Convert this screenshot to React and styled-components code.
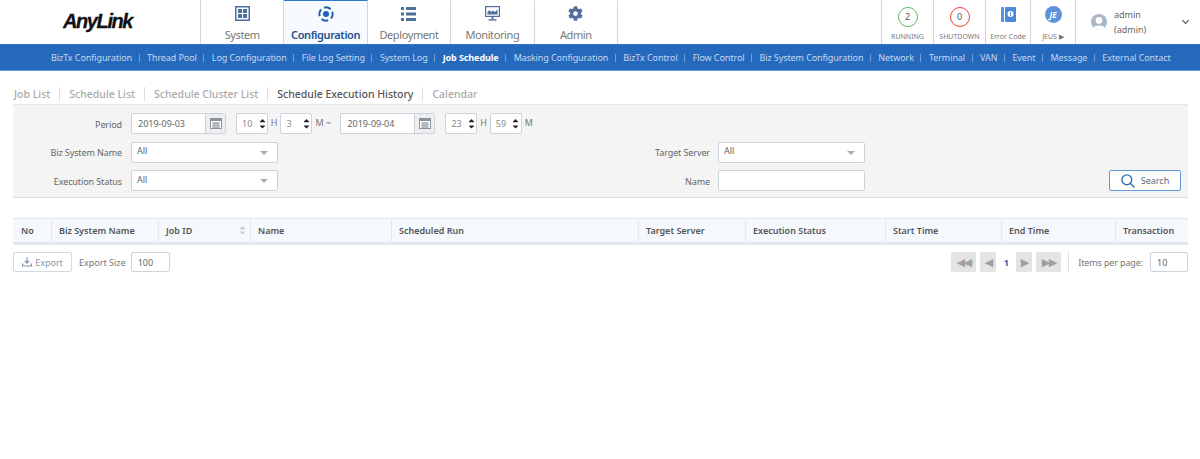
import React from "react";
import styled, { createGlobalStyle } from "styled-components";
import { FaCog, FaCaretUp, FaCaretDown } from "react-icons/fa";

const GlobalStyle = createGlobalStyle`
  html, body { margin: 0; padding: 0; background: #fff; }
  body { font-family: "Noto Sans", "Open Sans", sans-serif; color: #555; overflow: hidden; }
  * { box-sizing: border-box; }
`;

const navItems = [
  { label: "System", icon: <SystemIcon /> },
  { label: "Configuration", icon: <ConfigIcon />, active: true },
  { label: "Deployment", icon: <ListIcon /> },
  { label: "Monitoring", icon: <MonitorIcon /> },
  { label: "Admin", icon: <FaCog size={15} color="#4f6f9f" /> },
];

const subItems = [
  "BizTx Configuration", "Thread Pool", "Log Configuration", "File Log Setting", "System Log",
  "Job Schedule", "Masking Configuration", "BizTx Control", "Flow Control", "Biz System Configuration",
  "Network", "Terminal", "VAN", "Event", "Message", "External Contact",
];

const tabs = ["Job List", "Schedule List", "Schedule Cluster List", "Schedule Execution History", "Calendar"];

const columns = [
  { label: "No", width: 39 },
  { label: "Biz System Name", width: 107 },
  { label: "Job ID", width: 92, sort: true },
  { label: "Name", width: 141 },
  { label: "Scheduled Run", width: 247 },
  { label: "Target Server", width: 107 },
  { label: "Execution Status", width: 140 },
  { label: "Start Time", width: 116 },
  { label: "End Time", width: 114 },
  { label: "Transaction", width: 72 },
];

function SystemIcon() {
  return (
    <svg width="15" height="15" viewBox="0 0 15 15">
      <rect x="0.75" y="0.75" width="13.5" height="13.5" fill="none" stroke="#4f6f9f" strokeWidth="1.5" />
      <rect x="3" y="3" width="4" height="4" fill="#4f6f9f" />
      <rect x="8" y="3" width="4" height="4" fill="#4f6f9f" />
      <rect x="3" y="8" width="4" height="4" fill="#4f6f9f" />
      <rect x="8" y="8" width="4" height="4" fill="#4f6f9f" />
    </svg>
  );
}

function ConfigIcon() {
  return (
    <svg width="16" height="16" viewBox="0 0 16 16">
      <circle cx="8" cy="8" r="3" fill="#1f5fb4" />
      <circle cx="8" cy="8" r="6.6" fill="none" stroke="#1f5fb4" strokeWidth="2" strokeDasharray="7 3.4" transform="rotate(-20 8 8)" />
    </svg>
  );
}

function ListIcon() {
  return (
    <svg width="15" height="14" viewBox="0 0 15 14" fill="#4f6f9f">
      <rect x="0" y="0" width="3" height="3" />
      <rect x="5" y="0" width="10" height="3" />
      <rect x="0" y="5.5" width="3" height="3" />
      <rect x="5" y="5.5" width="10" height="3" />
      <rect x="0" y="11" width="3" height="3" />
      <rect x="5" y="11" width="10" height="3" />
    </svg>
  );
}

function MonitorIcon() {
  return (
    <svg width="15" height="15" viewBox="0 0 15 15">
      <rect x="0.6" y="0.6" width="13.8" height="9.8" fill="none" stroke="#4f6f9f" strokeWidth="1.2" />
      <path d="M2.5 8.5 V6 L4.5 4 L6 6 L8 4.5 L10 6 L12.5 3.5 V8.5 Z" fill="#4f6f9f" />
      <rect x="6.6" y="10.5" width="1.8" height="2.8" fill="#4f6f9f" />
      <rect x="3.5" y="13.2" width="8" height="1.4" fill="#4f6f9f" />
    </svg>
  );
}

function ErrorBookIcon() {
  return (
    <svg width="15" height="15" viewBox="0 0 15 15">
      <rect x="0" y="0" width="3" height="15" rx="0.5" fill="#5b93dc" />
      <rect x="4" y="0" width="11" height="15" rx="1" fill="#4d8ad6" />
      <circle cx="9.5" cy="7" r="3" fill="#fff" />
      <rect x="9" y="5" width="1" height="2.6" fill="#4d8ad6" />
      <rect x="9" y="8.1" width="1" height="1" fill="#4d8ad6" />
    </svg>
  );
}

function CalendarIcon() {
  return (
    <svg width="12" height="11" viewBox="0 0 12 11">
      <rect x="0.5" y="0.5" width="11" height="10" fill="#fff" stroke="#8a929c" />
      <rect x="0" y="0" width="12" height="3" fill="#8a929c" />
      <path d="M2 5h8M2 7h8M2 9h8M4 4v6M6 4v6M8 4v6" stroke="#8a929c" strokeWidth="0.8" />
    </svg>
  );
}

function ExportIcon() {
  return (
    <svg width="10" height="10" viewBox="0 0 10 10" fill="none" stroke="#7f93ad" strokeWidth="1.2">
      <path d="M5 0.5 V6 M2.8 3.8 L5 6.2 L7.2 3.8" />
      <path d="M0.6 6.5 V9 H9.4 V6.5" />
    </svg>
  );
}

function SearchIcon() {
  return (
    <svg width="14" height="14" viewBox="0 0 14 14" fill="none" stroke="#2e6fc0" strokeWidth="1.4">
      <circle cx="5.8" cy="5.8" r="4.9" />
      <path d="M9.3 9.3 L13.4 13.4" />
    </svg>
  );
}

function UserIcon() {
  return (
    <svg width="16" height="16" viewBox="0 0 16 16">
      <circle cx="8" cy="8" r="8" fill="#a9b7c9" />
      <circle cx="8" cy="6.4" r="3.3" fill="#fff" />
      <path d="M2.6 14 C3.4 10.8 12.6 10.8 13.4 14 C10.5 16.6 5.5 16.6 2.6 14 Z" fill="#fff" />
    </svg>
  );
}

const Spinner = ({ value }) => (
  <SpinBox>
    <span>{value}</span>
    <SpinArrows>
      <FaCaretUp size={9} />
      <FaCaretDown size={9} />
    </SpinArrows>
  </SpinBox>
);

const DatePicker = ({ value }) => (
  <DateBox>
    <span>{value}</span>
    <DateButton><CalendarIcon /></DateButton>
  </DateBox>
);

const Select = ({ value }) => (
  <SelectBox>
    <span>{value}</span>
    <SelectCaret />
  </SelectBox>
);

export default function App() {
  return (
    <Page>
      <GlobalStyle />
      <Header>
        <LogoArea>
          <Logo>AnyLink</Logo>
        </LogoArea>
        <MainNav>
          {navItems.map((item) => (
            <NavItem key={item.label} $active={item.active}>
              <NavIcon>{item.icon}</NavIcon>
              <NavLabel $active={item.active}>{item.label}</NavLabel>
            </NavItem>
          ))}
        </MainNav>
        <HeaderRight>
          <StatusCell $width={52}>
            <StatusCircle $color="#5cb85c">2</StatusCircle>
            <StatusLabel>RUNNING</StatusLabel>
          </StatusCell>
          <StatusCell $width={52}>
            <StatusCircle $color="#ee3b3b">0</StatusCircle>
            <StatusLabel>SHUTDOWN</StatusLabel>
          </StatusCell>
          <StatusCell $width={45}>
            <ErrorBook><ErrorBookIcon /></ErrorBook>
            <StatusLabel>Error Code</StatusLabel>
          </StatusCell>
          <StatusCell $width={45}>
            <JeusBadge>JE</JeusBadge>
            <StatusLabel>JEUS ▶</StatusLabel>
          </StatusCell>
          <UserCell>
            <UserIcon />
            <UserName>admin<br />(admin)</UserName>
            <Chevron />
          </UserCell>
        </HeaderRight>
      </Header>

      <SubNav>
        {subItems.map((item) => (
          <SubItem key={item} $active={item === "Job Schedule"}>{item}</SubItem>
        ))}
      </SubNav>

      <Tabs>
        {tabs.map((tab) => (
          <Tab key={tab} $active={tab === "Schedule Execution History"}>{tab}</Tab>
        ))}
      </Tabs>

      <Filter>
        <FilterRow>
          <Label>Period</Label>
          <DatePicker value="2019-09-03" />
          <TimeGroup>
            <Spinner value="10" />
            <Unit>H</Unit>
            <Spinner value="3" />
            <Unit>M ~</Unit>
          </TimeGroup>
          <DatePicker value="2019-09-04" />
          <TimeGroup>
            <Spinner value="23" />
            <Unit>H</Unit>
            <Spinner value="59" />
            <Unit>M</Unit>
          </TimeGroup>
        </FilterRow>
        <FilterRow>
          <Label>Biz System Name</Label>
          <Select value="All" />
          <Label $second>Target Server</Label>
          <Select value="All" />
        </FilterRow>
        <FilterRow>
          <Label>Execution Status</Label>
          <Select value="All" />
          <Label $second>Name</Label>
          <TextBox />
          <SearchButton><SearchIcon />Search</SearchButton>
        </FilterRow>
      </Filter>

      <Table>
        {columns.map((col) => (
          <HeadCell key={col.label} $width={col.width}>
            {col.label}
            {col.sort && <SortMark><FaCaretUp size={9} /><FaCaretDown size={9} /></SortMark>}
          </HeadCell>
        ))}
      </Table>

      <Footer>
        <ExportButton><ExportIcon />Export</ExportButton>
        <FooterLabel>Export Size</FooterLabel>
        <SizeBox $width={39}>100</SizeBox>
        <Pager>
          <PageButton $width={25}>◀◀</PageButton>
          <PageButton $width={16}>◀</PageButton>
          <PageNumber>1</PageNumber>
          <PageButton $width={16}>▶</PageButton>
          <PageButton $width={25}>▶▶</PageButton>
          <PagerDivider />
          <PerPageLabel>Items per page:</PerPageLabel>
          <SizeBox $width={38}>10</SizeBox>
        </Pager>
      </Footer>
    </Page>
  );
}

const Page = styled.div`
  width: 1200px;
  height: 459px;
  overflow: hidden;
  background: #fff;
`;

const Header = styled.header`
  display: flex;
  height: 44px;
  background: #fff;
`;

const LogoArea = styled.div`
  width: 200px;
  display: flex;
  align-items: center;
  padding-left: 63px;
`;

const Logo = styled.div`
  font-family: "Liberation Sans", sans-serif;
  font-size: 20px;
  font-weight: 700;
  font-style: italic;
  letter-spacing: -1.4px;
  -webkit-text-stroke: 0.3px #111;
  color: #111;
  margin-top: -2px;
`;

const MainNav = styled.nav`
  display: flex;
  height: 44px;
  border-left: 1px solid #d5d5d5;
`;

const NavItem = styled.div`
  width: 83.4px;
  height: 44px;
  border-right: 1px solid #d5d5d5;
  border-top: 1px solid ${(p) => (p.$active ? "#2f76c8" : "transparent")};
  background: ${(p) => (p.$active ? "#f7fbff" : "#fff")};
  display: flex;
  flex-direction: column;
  align-items: center;
`;

const NavIcon = styled.div`
  height: 17px;
  margin-top: 4px;
  display: flex;
  align-items: center;
`;

const NavLabel = styled.div`
  margin-top: 5px;
  font-size: 11px;
  line-height: 15px;
  letter-spacing: -0.4px;
  color: ${(p) => (p.$active ? "#1e4f8f" : "#777")};
  font-weight: ${(p) => (p.$active ? 600 : 400)};
`;

const HeaderRight = styled.div`
  margin-left: auto;
  display: flex;
  height: 44px;
`;

const StatusCell = styled.div`
  width: ${(p) => p.$width}px;
  border-left: 1px solid #d5d5d5;
  display: flex;
  flex-direction: column;
  align-items: center;
`;

const StatusCircle = styled.div`
  width: 20px;
  height: 20px;
  margin-top: 7px;
  border-radius: 50%;
  border: 1.5px solid ${(p) => p.$color};
  font-size: 9px;
  line-height: 17px;
  text-align: center;
  color: #555;
`;

const StatusLabel = styled.div`
  margin-top: 5px;
  font-size: 7px;
  line-height: 10px;
  color: #777;
  white-space: nowrap;
`;

const ErrorBook = styled.div`
  height: 15px;
  margin-top: 7px;
  margin-bottom: 5px;
  line-height: 0;
`;

const JeusBadge = styled.div`
  width: 17px;
  height: 17px;
  margin-top: 6px;
  margin-bottom: 4px;
  border-radius: 50%;
  background: #5b93dc;
  color: #fff;
  font-size: 8px;
  font-weight: 700;
  font-style: italic;
  line-height: 17px;
  text-align: center;
`;

const UserCell = styled.div`
  width: 125px;
  border-left: 1px solid #d5d5d5;
  display: flex;
  align-items: center;
  padding-left: 15px;
`;

const UserName = styled.div`
  margin-left: 7px;
  font-size: 9px;
  line-height: 15px;
  color: #666;
`;

const Chevron = styled.div`
  width: 5px;
  height: 5px;
  margin-left: auto;
  margin-right: 12px;
  margin-top: -3px;
  border-right: 1px solid #444;
  border-bottom: 1px solid #444;
  transform: rotate(45deg);
`;

const SubNav = styled.div`
  height: 27px;
  background: #2569bd;
  border-top: 1px solid #2f72c4;
  border-bottom: 1px solid #5e97d9;
  display: flex;
  align-items: center;
  padding-left: 43.5px;
`;

const SubItem = styled.div`
  position: relative;
  padding: 0 7.5px;
  font-size: 9px;
  line-height: 12px;
  letter-spacing: -0.09px;
  white-space: nowrap;
  color: ${(p) => (p.$active ? "#fff" : "#c5d8ef")};
  font-weight: ${(p) => (p.$active ? 700 : 400)};
  &:not(:last-child)::after {
    content: "";
    position: absolute;
    right: 0;
    top: 2px;
    height: 8px;
    width: 1px;
    background: #6f9fd8;
  }
`;

const Tabs = styled.div`
  display: flex;
  align-items: center;
  height: 14px;
  margin: 16px 0 0 14px;
`;

const Tab = styled.div`
  font-size: 10.5px;
  font-weight: 500;
  line-height: 14px;
  color: ${(p) => (p.$active ? "#555" : "#aaa")};
  padding-right: 9px;
  margin-right: 9px;
  border-right: 1px solid #ddd;
  &:last-child { border-right: none; }
`;

const Filter = styled.section`
  margin: 3px 12px 0 13px;
  height: 94px;
  background: #f4f4f4;
  border-top: 1px solid #e6e6e6;
  border-bottom: 1px solid #dcdcdc;
  padding-top: 8px;
  display: flex;
  flex-direction: column;
  gap: 7.5px;
`;

const FilterRow = styled.div`
  display: flex;
  align-items: center;
  height: 21px;
`;

const Label = styled.div`
  width: ${(p) => (p.$second ? "432px" : "109px")};
  margin-right: ${(p) => (p.$second ? "8px" : "9px")};
  padding-top: 1px;
  text-align: right;
  font-size: 9px;
  letter-spacing: -0.1px;
  color: #666;
  white-space: nowrap;
`;

const fieldBorder = "1px solid #cdd3dc";

const DateBox = styled.div`
  width: 95px;
  height: 21px;
  display: flex;
  align-items: center;
  justify-content: space-between;
  background: #fff;
  border: ${fieldBorder};
  border-radius: 2px;
  padding-left: 6px;
  font-size: 9px;
  color: #666;
`;

const DateButton = styled.div`
  width: 20px;
  height: 19px;
  background: #eee;
  border-left: ${fieldBorder};
  display: flex;
  align-items: center;
  justify-content: center;
`;

const TimeGroup = styled.div`
  display: flex;
  align-items: center;
  margin-left: 10px;
`;

const SpinBox = styled.div`
  width: 32px;
  height: 21px;
  display: flex;
  align-items: center;
  justify-content: space-between;
  background: #fff;
  border: ${fieldBorder};
  border-radius: 2px;
  padding-left: 5px;
  font-size: 9px;
  color: #8a8a8a;
`;

const SpinArrows = styled.div`
  width: 10px;
  display: flex;
  flex-direction: column;
  align-items: center;
  color: #222;
  & > svg { display: block; margin: -1.5px 0; }
`;

const Unit = styled.div`
  width: 12.4px;
  margin-top: -3px;
  text-align: center;
  font-size: 9px;
  color: #777;
  white-space: nowrap;
  &:last-child { width: 28px; text-align: left; padding-left: 3px; }
`;

const SelectBox = styled.div`
  width: 147px;
  height: 21px;
  display: flex;
  align-items: center;
  justify-content: space-between;
  background: #fff;
  border: ${fieldBorder};
  border-radius: 2px;
  padding: 0 5px 3px 5px;
  font-size: 9px;
  color: #666;
`;

const SelectCaret = styled.div`
  width: 0;
  height: 0;
  margin: 4px 4px 0 0;
  border-left: 4px solid transparent;
  border-right: 4px solid transparent;
  border-top: 4px solid #a5adb8;
`;

const TextBox = styled.div`
  width: 147px;
  height: 21px;
  background: #fff;
  border: ${fieldBorder};
  border-radius: 2px;
`;

const SearchButton = styled.div`
  width: 72px;
  height: 21px;
  margin-left: 244px;
  display: flex;
  align-items: center;
  justify-content: center;
  gap: 6px;
  background: #fff;
  border: 1px solid #5e97d9;
  border-radius: 2px;
  font-size: 9px;
  color: #5a6b80;
`;

const Table = styled.div`
  display: flex;
  margin: 20px 12px 0 13px;
  height: 27px;
  background: #f5f8fd;
  border-top: 1px solid #e2e8f2;
  border-bottom: 3px solid #e2e9f3;
`;

const HeadCell = styled.div`
  position: relative;
  width: ${(p) => p.$width}px;
  display: flex;
  align-items: center;
  padding-left: 7px;
  border-right: 1px solid #e2e8f2;
  font-size: 9px;
  font-weight: 600;
  color: #555;
  white-space: nowrap;
  &:first-child { padding-left: 8px; }
  &:last-child { border-right: none; }
`;

const SortMark = styled.div`
  position: absolute;
  right: 3px;
  top: 6px;
  display: flex;
  flex-direction: column;
  color: #ccc;
  & > svg { display: block; margin: -2px 0; }
`;

const Footer = styled.div`
  display: flex;
  align-items: center;
  margin: 7px 12px 0 13px;
  height: 20px;
`;

const ExportButton = styled.div`
  width: 59px;
  height: 20px;
  display: flex;
  align-items: center;
  justify-content: center;
  gap: 3px;
  background: #fff;
  border: 1px solid #d5d8dd;
  border-radius: 2px;
  font-size: 9px;
  color: #8a97a8;
`;

const FooterLabel = styled.div`
  margin: 0 5px 0 7px;
  font-size: 9px;
  color: #777;
  white-space: nowrap;
`;

const PerPageLabel = styled(FooterLabel)`
  margin: 0 3px 0 5px;
  letter-spacing: -0.13px;
`;

const SizeBox = styled.div`
  width: ${(p) => p.$width}px;
  height: 20px;
  display: flex;
  align-items: center;
  padding-left: 6px;
  background: #fff;
  border: 1px solid #cdd3dc;
  border-radius: 2px;
  font-size: 9px;
  color: #666;
`;

const Pager = styled.div`
  margin-left: auto;
  display: flex;
  align-items: center;
  gap: 4px;
`;

const PageButton = styled.div`
  width: ${(p) => p.$width}px;
  height: 20px;
  display: flex;
  align-items: center;
  justify-content: center;
  background: #e4e4e4;
  color: #a0a0a0;
  font-family: "DejaVu Sans", sans-serif;
  font-size: 11px;
  letter-spacing: -1.5px;
`;

const PageNumber = styled.div`
  width: 12px;
  text-align: center;
  font-size: 9px;
  font-weight: 700;
  color: #2a5fb0;
`;

const PagerDivider = styled.div`
  width: 1px;
  height: 20px;
  margin-left: 3px;
  background: #e2e2e2;
`;
